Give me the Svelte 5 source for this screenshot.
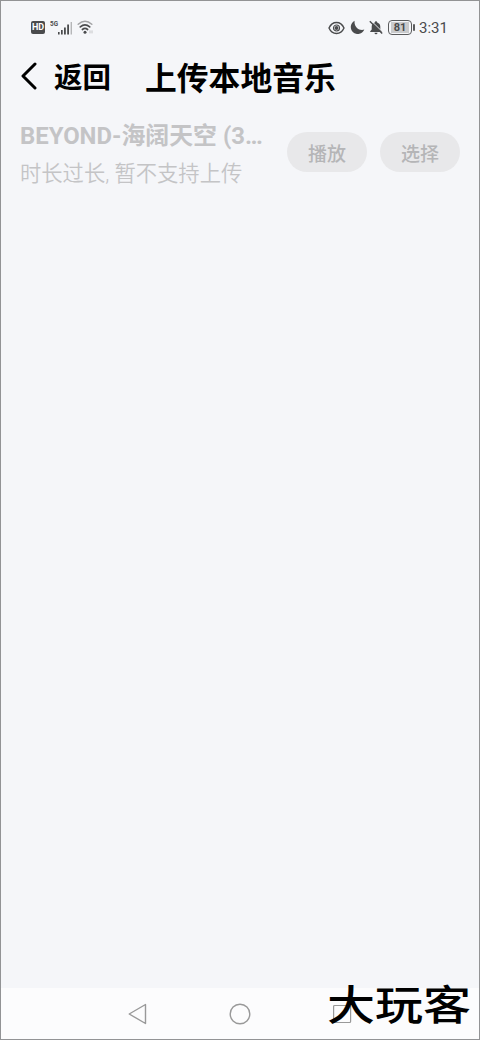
<script lang="ts">
  type Track = { name: string; note: string };

  const tracks: Track[] = [
    { name: 'BEYOND-海阔天空 (3…', note: '时长过长, 暂不支持上传' },
  ];
</script>

<div class="phone">
  <div class="status">
    <div class="signals">
      <span class="hd">HD</span>
      <span class="net">5G</span>
      <svg class="bars" width="16" height="14" viewBox="0 0 16 14" fill="#4a4b4d">
        <rect x="0" y="11" width="1.6" height="2.5" />
        <rect x="3" y="9" width="1.7" height="4.5" />
        <rect x="6" y="6.5" width="1.8" height="7" />
        <rect x="9.2" y="3.5" width="1.8" height="10" />
        <rect x="12.6" y="1" width="1.4" height="12.5" fill="#b5b6b8" />
      </svg>
      <svg class="wifi" width="17" height="15" viewBox="0 0 17 15" fill="none" stroke-linecap="round">
        <path d="M1.2 4.2Q8 -1.6 14.8 4.2" stroke="#a2a3a5" stroke-width="1.5" />
        <path d="M3.3 6.9Q8 2.9 12.7 6.9" stroke="#4a4b4d" stroke-width="1.7" />
        <path d="M5.4 9.5Q8 7.4 10.6 9.5" stroke="#4a4b4d" stroke-width="1.7" />
        <circle cx="8" cy="12.2" r="1.5" fill="#4a4b4d" />
        <path d="M13 10.8v2.2M15 10.8v2.2" stroke="#c4c5c7" stroke-width="1" />
      </svg>
    </div>

    <div class="system">
      <svg width="17" height="14" viewBox="0 0 17 14" fill="none" stroke="#4a4b4d" stroke-width="1.4">
        <path d="M1 7C4.3 -.4 12.7 -.4 16 7C12.7 14.4 4.3 14.4 1 7Z" />
        <circle cx="8.5" cy="7" r="3" stroke-width="1.2" />
        <circle cx="8.5" cy="7" r="1.9" fill="#4a4b4d" stroke="none" />
      </svg>
      <svg class="moon" width="15" height="15" viewBox="0 0 15 15" fill="#4a4b4d">
        <path d="M4.6 .8A7 7 0 1 0 14.3 9.6C9.2 11.4 3.8 6.8 4.6 .8Z" />
      </svg>
      <svg class="bell" width="14" height="15" viewBox="0 0 14 15">
        <path d="M7 1.2a1.2 1.2 0 0 1 1.2 1.2C10.2 3 11.3 4.6 11.3 6.5V9.6L12.8 11.3V12H1.2V11.3L2.7 9.6V6.5C2.7 4.6 3.8 3 5.8 2.4A1.2 1.2 0 0 1 7 1.2ZM5.5 12.8h3a1.5 1.5 0 0 1-3 0Z" fill="#4a4b4d" />
        <path d="M1.9 .5L14 12.4" stroke="#f5f6f9" stroke-width="1" />
        <path d="M.8 1.3L13.2 13.4" stroke="#4a4b4d" stroke-width="1.4" />
      </svg>
      <span class="battery"><span class="level">81</span></span>
      <span class="time">3:31</span>
    </div>
  </div>

  <header>
    <button type="button" class="back">
      <svg width="18" height="28" viewBox="0 0 18 28" fill="none" stroke="#000" stroke-width="3" stroke-linecap="round" stroke-linejoin="round"><path d="M15 2L3 14L15 26" /></svg>
      <span>返回</span>
    </button>
    <h1>上传本地音乐</h1>
  </header>

  <main>
    {#each tracks as track}
      <div class="track">
        <div class="info">
          <div class="name">{track.name}</div>
          <div class="note">{track.note}</div>
        </div>
        <button type="button" class="pill" disabled>播放</button>
        <button type="button" class="pill" disabled>选择</button>
      </div>
    {/each}
  </main>

  <nav>
    <svg width="20" height="22" viewBox="0 0 20 22" fill="none" stroke="#999" stroke-width="1.4" stroke-linejoin="round"><path d="M2.2 11L18.5 1.5V20.5Z" /></svg>
    <svg width="22" height="22" viewBox="0 0 22 22" fill="none" stroke="#999" stroke-width="1.4"><circle cx="11" cy="11" r="9.8" /></svg>
    <svg width="20" height="20" viewBox="0 0 20 20" fill="none" stroke="#999" stroke-width="1.2"><rect x="0.6" y="1.5" width="17" height="17" rx="1" /></svg>
  </nav>

  <div class="watermark">大玩客</div>
</div>

<style>
  :global(body) {
    margin: 0;
  }

  .phone {
    position: relative;
    display: flex;
    flex-direction: column;
    box-sizing: border-box;
    width: 480px;
    height: 1040px;
    border: 1px solid #929395;
    background: #f5f6f9;
    font-family: Roboto, 'Noto Sans CJK SC', sans-serif;
    overflow: hidden;
  }

  svg {
    display: block;
    flex-shrink: 0;
  }

  /* Barra de estado */
  .status {
    display: flex;
    justify-content: space-between;
    align-items: center;
    height: 53px;
    padding: 0 31px 0 30px;
    box-sizing: border-box;
    color: #4a4b4d;
  }
  .signals,
  .system {
    display: flex;
    align-items: center;
  }
  .hd {
    width: 14px;
    height: 13px;
    border-radius: 2px;
    background: #4a4b4d;
    color: #fff;
    font-size: 9px;
    font-weight: 700;
    line-height: 13px;
    text-align: center;
  }
  .net {
    margin: 0 0 8px 5px;
    width: 8px;
    font-size: 8px;
    font-weight: 700;
    line-height: 8px;
    transform: scaleX(0.8);
    transform-origin: left;
  }
  .wifi {
    margin-left: 3px;
  }
  .moon {
    margin-left: 5px;
  }
  .bell {
    margin-left: 4px;
  }
  .battery {
    position: relative;
    box-sizing: border-box;
    width: 24px;
    height: 15px;
    margin: 0 7px 0 5px;
    padding: 1px;
    border: 1.4px solid #5a5b5d;
    border-radius: 4px;
  }
  .battery::after {
    content: '';
    position: absolute;
    top: 3px;
    right: -4px;
    width: 2px;
    height: 7px;
    border-radius: 1px;
    background: #5a5b5d;
  }
  .level {
    display: block;
    width: 18px;
    height: 11px;
    margin-left: 1px;
    background: #c9cacc;
    font-size: 11px;
    font-weight: 700;
    line-height: 11px;
    text-align: center;
  }
  .time {
    width: 29px;
    font-size: 15px;
    white-space: nowrap;
  }

  header {
    display: flex;
    align-items: center;
    height: 46px;
    padding-left: 19px;
  }
  .back {
    display: flex;
    align-items: center;
    gap: 16px;
    width: 125px;
    padding: 0;
    border: 0;
    background: none;
    color: #000;
    font: inherit;
    font-size: 28.5px;
    font-weight: 700;
    line-height: 46px;
  }
  .back svg {
    margin-top: -2px;
  }
  .back span {
    padding-top: 3px;
  }
  h1 {
    margin: 0;
    padding-top: 3px;
    font-size: 31.8px;
    font-weight: 700;
    line-height: 46px;
  }

  main {
    flex: 1;
  }
  .track {
    display: flex;
    align-items: center;
    height: 76px;
    margin-top: 15px;
    padding: 0 19px;
  }
  .info {
    flex: 1;
    min-width: 0;
    padding-top: 3px;
    color: #c4c4c6;
  }
  .name {
    overflow: hidden;
    font-size: 23.9px;
    font-weight: 700;
    line-height: 38px;
    text-overflow: ellipsis;
    white-space: nowrap;
  }
  .note {
    font-size: 21.3px;
    font-weight: 350;
    line-height: 37px;
    white-space: nowrap;
  }
  .pill {
    width: 80px;
    height: 40px;
    margin-top: -2px;
    padding: 0;
    border: 0;
    border-radius: 20px;
    background: #e8e8ea;
    color: #b5b5b7;
    font: inherit;
    font-size: 19px;
    font-weight: 500;
  }
  .pill + .pill {
    margin-left: 13px;
  }

  /* Botones del sistema */
  nav {
    display: flex;
    align-items: center;
    height: 51px;
    padding-left: 126px;
    gap: 82px;
    background: #fcfcfd;
  }

  .watermark {
    position: absolute;
    right: 8px;
    bottom: 9px;
    color: #000;
    font-size: 48px;
    font-weight: 500;
    line-height: 48px;
    transform: scaleY(0.86);
  }
</style>
